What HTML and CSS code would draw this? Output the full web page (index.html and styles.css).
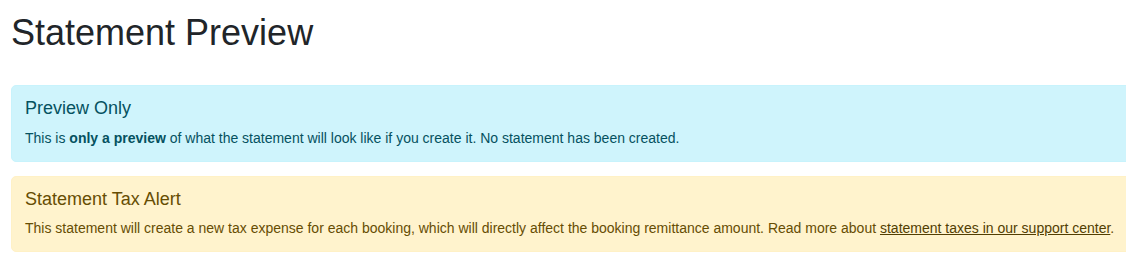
FILE: index.html
```html
<!DOCTYPE html>
<html>
<head>
<meta charset="utf-8">
<link rel="stylesheet" href="styles.css">
</head>
<body>
<div class="page">
  <h1 class="title">Statement Preview</h1>
  <div class="alert alert-info">
    <h4 class="alert-heading">Preview Only</h4>
    <p class="alert-text">This is <strong>only a preview</strong> of what the statement will look like if you create it. No statement has been created.</p>
  </div>
  <div class="alert alert-warning">
    <h4 class="alert-heading">Statement Tax Alert</h4>
    <p class="alert-text">This statement will create a new tax expense for each booking, which will directly affect the booking remittance amount. Read more about <a class="alert-link" href="#">statement taxes in our support center</a>.</p>
  </div>
</div>
</body>
</html>
```

FILE: styles.css
```css
html, body {
  margin: 0;
  padding: 0;
  background: #fff;
  overflow: hidden;
}
body {
  font-family: "Liberation Sans", Arial, sans-serif;
  color: #212529;
}
.page {
  width: 1160px;
  padding: 11px 0 0 11px;
}
.title {
  margin: 0 0 31px 0;
  font-size: 36px;
  font-weight: 400;
  line-height: 1.2;
  color: #212529;
}
.alert {
  border: 1px solid transparent;
  border-radius: 5px;
  padding: 12px 13px;
  margin-bottom: 14px;
}
.alert-info {
  background: #cff4fc;
  border-color: #c8f3fc;
  color: #055160;
}
.alert-warning {
  background: #fff3cd;
  border-color: #fff1c6;
  color: #664d03;
}
.alert-heading {
  margin: 0 0 8px 0;
  font-size: 18px;
  font-weight: 400;
  line-height: 1.2;
}
.alert-text {
  margin: 0;
  font-size: 14px;
  line-height: 21px;
}
.alert-text strong {
  font-weight: 700;
}
.alert-link {
  color: #523e02;
  text-decoration: underline;
}
```
